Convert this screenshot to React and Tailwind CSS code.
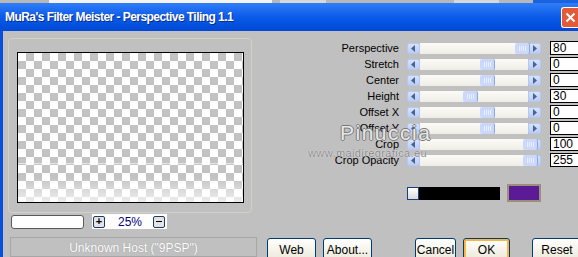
import React from 'react';

const sliders = [
  { label: 'Perspective', pos: 95, value: '80' },
  { label: 'Stretch', pos: 60, value: '0' },
  { label: 'Center', pos: 60, value: '0' },
  { label: 'Height', pos: 43, value: '30' },
  { label: 'Offset X', pos: 60, value: '0' },
  { label: 'Offset Y', pos: 60, value: '0' },
  { label: 'Crop', pos: 103, value: '100' },
  { label: 'Crop Opacity', pos: 103, value: '255' },
];

function Arrow({ left }) {
  return (
    <div className="flex h-[11px] w-[13px] shrink-0 items-center justify-center rounded-[2px] border border-[#b4c8f4] bg-gradient-to-b from-[#d6e2fd] to-[#b9cdf9]">
      <svg width="5" height="7" viewBox="0 0 5 7">
        {left ? <polygon points="4,0 4,7 0,3.5" fill="#4d6185" /> : <polygon points="1,0 1,7 5,3.5" fill="#4d6185" />}
      </svg>
    </div>
  );
}

function Slider({ pos }) {
  return (
    <div className="flex h-[11px] w-[134px]">
      <Arrow left />
      <div className="relative flex-1 bg-gradient-to-b from-[#fbfaf6] to-[#efeee6]">
        <div
          className="absolute top-0 flex h-full w-[15px] items-center justify-center gap-[1px] rounded-[2px] border-r border-[#8ea6dc] bg-[#c9d8fb]"
          style={{ left: pos }}
        >
          <span className="h-[5px] w-[1px] bg-[#e8eefd]" />
          <span className="h-[5px] w-[1px] bg-[#e8eefd]" />
          <span className="h-[5px] w-[1px] bg-[#e8eefd]" />
          <span className="h-[5px] w-[1px] bg-[#e8eefd]" />
        </div>
      </div>
      <Arrow />
    </div>
  );
}

function XpButton({ children, w, focus }) {
  return (
    <div
      className={`flex h-[23px] ${w} shrink-0 items-center justify-center rounded-[3px] border border-[#003c74] bg-gradient-to-b from-white to-[#ece9d8] text-[12px] text-black ${focus ? 'shadow-[inset_0_0_0_2px_#f9b640]' : ''}`}
    >
      {children}
    </div>
  );
}

export default function App() {
  return (
    <div className="relative h-[257px] w-[578px] overflow-hidden bg-[#c0c0c0] font-['Liberation_Sans',Arial,sans-serif] font-normal">
      {/* window behind */}
      <div className="flex h-[3px] bg-[#b8b8b8]">
        <div className="w-[50px]" />
        <div className="w-[226px] bg-[#f4f4f4]" />
        <div className="w-[8px]" />
        <div className="w-[46px] bg-[#d8d8d8]" />
        <div className="w-[130px]" />
        <div className="w-[46px] bg-[#d8d8d8]" />
        <div className="w-[34px]" />
        <div className="w-[46px] bg-[#1a62e0]" />
      </div>

      {/* title bar */}
      <div className="flex h-[28px] items-center justify-between bg-gradient-to-b from-[#2f7ef6] via-[#0b5ae9] to-[#0049d6] pl-[5px]">
        <span className="text-[12px] font-bold tracking-[-0.55px] text-white [text-shadow:1px_1px_0_#0a2c88]">
          MuRa's Filter Meister - Perspective Tiling 1.1
        </span>
        <div className="flex h-[21px] w-[17px] items-center justify-center rounded-l-[3px] border border-r-0 border-white bg-[#e35a39]">
          <svg width="11" height="11" viewBox="0 0 11 11">
            <path d="M1.5 1.5 L9.5 9.5 M9.5 1.5 L1.5 9.5" stroke="#fff" strokeWidth="2" />
          </svg>
        </div>
      </div>

      {/* body */}
      <div className="flex h-[226px] border-l-[3px] border-[#0a4fdc]">
        {/* preview column */}
        <div className="flex w-[257px] shrink-0 flex-col">
          <div className="ml-[5px] mt-[7px] h-[180px] w-[244px] rounded-[4px] border border-[#d2d2c2] pl-[8px] pt-[13px]">
            <div className="relative h-[151px] w-[227px] overflow-hidden border border-black bg-[conic-gradient(#c3c3c3_25%,#fff_0_50%,#c3c3c3_0_75%,#fff_0)] bg-[length:16px_16px]">
              <div className="absolute left-0 right-0 top-[110px] h-[1px] bg-white/60" />
              <div className="absolute bottom-0 left-0 right-0 h-[24px] bg-gradient-to-b from-white/0 via-white/40 to-white/70" />
            </div>
          </div>

          <div className="ml-[8px] mt-[1px] flex items-center gap-[8px]">
            <div className="h-[14px] w-[73px] rounded-[3px] border border-[#5a5a5a] bg-white" />
            <div className="flex h-[15px] w-[75px] items-center bg-white pl-[1px]">
              <div className="flex h-[12px] w-[12px] items-center justify-center rounded-[2px] border border-[#1c3a6e] bg-[#e4e4e4] text-[11px] font-bold leading-none text-black">
                +
              </div>
              <span className="ml-[13px] w-[35px] text-[12px] text-[#000080]">25%</span>
              <div className="flex h-[12px] w-[12px] items-center justify-center rounded-[2px] border border-[#1c3a6e] bg-[#e4e4e4]">
                <span className="h-[1px] w-[6px] bg-black" />
              </div>
            </div>
          </div>

          <div className="ml-[7px] mt-[8px] flex h-[20px] w-[247px] justify-center border border-[#a6a6a6] pt-[1px] text-[12px] text-white [text-shadow:0_0_1px_#8a8a8a]">
            Unknown Host ("9PSP")
          </div>
        </div>

        {/* controls column */}
        <div className="flex flex-col">
          <div className="mt-[9px] flex flex-col">
            {sliders.map((s) => (
              <div key={s.label} className="flex h-[16px] items-center">
                <span className="w-[140px] pr-[1px] text-right text-[11px] font-normal leading-none text-black">{s.label}</span>
                <div className="ml-[7px]">
                  <Slider pos={s.pos} />
                </div>
                <div className="ml-[9px] flex h-[14px] w-[40px] items-center border border-black bg-white pl-[2px] text-[12px] leading-none text-black">
                  {s.value}
                </div>
              </div>
            ))}
          </div>

          <div className="ml-[147px] mt-[16px] flex h-[18px] items-center">
            <div className="h-[13px] w-[12px] border border-[#1d3f7a] bg-gradient-to-b from-white to-[#d9d9d9]" />
            <div className="h-[13px] w-[81px] bg-black" />
            <div className="ml-[7px] h-[18px] w-[34px] border-2 border-[#9c8f78] bg-[#5b1a96]" />
          </div>

          <div className="ml-[7px] mt-[36px] flex">
            <XpButton w="w-[49px]">Web</XpButton>
            <div className="ml-[7px]">
              <XpButton w="w-[49px]">About...</XpButton>
            </div>
            <div className="ml-[43px]">
              <XpButton w="w-[41px]">Cancel</XpButton>
            </div>
            <div className="ml-[7px]">
              <XpButton w="w-[47px]" focus>OK</XpButton>
            </div>
            <div className="ml-[22px]">
              <XpButton w="w-[50px]">Reset</XpButton>
            </div>
          </div>
        </div>
      </div>

      {/* watermark */}
      <div className="pointer-events-none absolute left-[308px] top-[122px] flex w-[122px] flex-col">
        <span className="ml-[32px] text-[21px] leading-none tracking-[1.5px] text-[#e8e8e8] [text-shadow:1px_0_0_#7a7a7a,-1px_0_0_#7a7a7a,0_1px_0_#7a7a7a,0_-1px_0_#7a7a7a]">
          Pinuccia
        </span>
        <span className="mt-[5px] text-[11px] leading-none tracking-[0.4px] text-[#8a8a8a] [text-shadow:0_0_1px_#fff]">
          www.maidiregrafica.eu
        </span>
      </div>
    </div>
  );
}
